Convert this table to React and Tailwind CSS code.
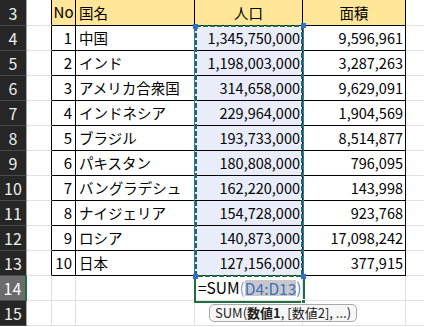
import React from 'react';

const rows = [
  [1, '中国', '1,345,750,000', '9,596,961'],
  [2, 'インド', '1,198,003,000', '3,287,263'],
  [3, 'アメリカ合衆国', '314,658,000', '9,629,091'],
  [4, 'インドネシア', '229,964,000', '1,904,569'],
  [5, 'ブラジル', '193,733,000', '8,514,877'],
  [6, 'パキスタン', '180,808,000', '796,095'],
  [7, 'バングラデシュ', '162,220,000', '143,998'],
  [8, 'ナイジェリア', '154,728,000', '923,768'],
  [9, 'ロシア', '140,873,000', '17,098,242'],
  [10, '日本', '127,156,000', '377,915'],
];

const font = { fontFamily: '"Noto Sans CJK JP", "Noto Sans", sans-serif' };

const RowHead = ({ n, active }) => (
  <div
    className={
      'w-[27px] shrink-0 flex items-center justify-center text-[16px] border-b border-b-[#4a4a4a] ' +
      (active
        ? 'bg-[#6b6b6b] text-white border-r-2 border-r-[#1e6e42]'
        : 'bg-[#262626] text-[#ececec] border-r border-r-[#a6a6a6]')
    }
  >
    {n}
  </div>
);

export default function App() {
  return (
    <div className="relative w-[424px] h-[327px] bg-white overflow-hidden text-black" style={font}>
      {/* header row */}
      <div className="flex h-[26px]">
        <RowHead n={3} />
        <div className="w-[25px] shrink-0 border-b border-b-[#e1e1e1] border-r border-r-black" />
        <div className="w-[24px] shrink-0 bg-[#ffe699] border-r border-b border-black flex items-center justify-center text-[15px]">No</div>
        <div className="w-[119px] shrink-0 bg-[#ffe699] border-r border-b border-black flex items-center pl-[3px] text-[14.5px]">国名</div>
        <div className="w-[108px] shrink-0 bg-[#ffe699] border-r border-b border-black flex items-center justify-center text-[14.5px]">人口</div>
        <div className="w-[103px] shrink-0 bg-[#ffe699] border-r border-b border-black flex items-center justify-center text-[14.5px]">面積</div>
        <div className="flex-1 border-b border-[#e1e1e1]" />
      </div>

      {rows.map(([no, name, pop, area], i) => (
        <div key={no} className="flex h-[25px]">
          <RowHead n={i + 4} />
          <div className="w-[25px] shrink-0 border-b border-b-[#e1e1e1] border-r border-r-black" />
          <div className="w-[24px] shrink-0 border-r border-b border-black flex items-center justify-end pr-[3px] text-[15px]">{no}</div>
          <div className="w-[119px] shrink-0 border-r border-b border-black flex items-center pl-[3px] text-[14.5px] whitespace-nowrap">{name}</div>
          <div className="w-[108px] shrink-0 bg-[#e9ecf9] border-r border-b border-black flex items-center justify-end pr-[2px] text-[14.5px]">{pop}</div>
          <div className="w-[103px] shrink-0 border-r border-b border-black flex items-center justify-end pr-[2px] text-[14.5px]">{area}</div>
          <div className="flex-1 border-b border-[#e1e1e1]" />
        </div>
      ))}

      {/* row 14 */}
      <div className="flex h-[25px]">
        <RowHead n={14} active />
        <div className="w-[25px] shrink-0 border-r border-b border-[#e1e1e1]" />
        <div className="w-[24px] shrink-0 border-r border-b border-[#e1e1e1]" />
        <div className="w-[119px] shrink-0 border-r border-b border-[#e1e1e1]" />
        <div className="w-[108px] shrink-0 border-r border-b border-[#e1e1e1] flex items-center pl-[3px] text-[15.5px] whitespace-nowrap">
          <span>=SUM</span>
          <span className="text-[#7f9cd0]">(</span>
          <span className="bg-[#c8c8c8] text-[#3d6fc6] leading-[16px]">D4:D13</span>
          <span className="text-[#5b82c8]">)</span>
        </div>
        <div className="w-[103px] shrink-0 border-r border-b border-[#e1e1e1]" />
        <div className="flex-1 border-b border-[#e1e1e1]" />
      </div>

      {/* row 15 */}
      <div className="flex h-[25px]">
        <RowHead n={15} />
        <div className="w-[25px] shrink-0 border-r border-b border-[#e1e1e1]" />
        <div className="w-[24px] shrink-0 border-r border-b border-[#e1e1e1]" />
        <div className="w-[119px] shrink-0 border-r border-b border-[#e1e1e1]" />
        <div className="w-[108px] shrink-0 border-r border-b border-[#e1e1e1]" />
        <div className="w-[103px] shrink-0 border-r border-b border-[#e1e1e1]" />
        <div className="flex-1 border-b border-[#e1e1e1]" />
      </div>

      {/* active cell D14 */}
      <div className="absolute left-[194px] top-[277px] w-[111px] h-[26px] border-x-2 border-b-2 border-[#1e6e42]" />
      <div className="absolute left-[301px] top-[299px] w-[5px] h-[5px] bg-[#1e6e42] border border-white" />

      {/* reference range D4:D13 */}
      <svg className="absolute left-[193px] top-[23px]" width="114" height="258">
        <line x1="1.5" y1="3" x2="1.5" y2="253" stroke="#2f6fd0" strokeWidth="1" />
        <line x1="110.5" y1="3" x2="110.5" y2="253" stroke="#2f6fd0" strokeWidth="1" />
        <rect x="3" y="3" width="106" height="250" fill="none" stroke="#1e6e42" strokeWidth="2" strokeDasharray="5 2" />
        <rect x="0" y="1" width="5" height="5" fill="#2f6fd0" />
        <rect x="108" y="0" width="5" height="5" fill="#2f6fd0" />
        <rect x="0" y="251" width="5" height="5" fill="#2f6fd0" />
        <rect x="108" y="251" width="5" height="5" fill="#2f6fd0" />
      </svg>

      {/* tooltip */}
      <div className="absolute left-[209px] top-[304px] h-[18px] px-[5px] flex items-center rounded-[5px] border border-[#a9a9a9] bg-[#f7f7f7] text-[13px] text-[#222] whitespace-nowrap">
        SUM(<b>数値1</b>, [数値2], ...)
      </div>
    </div>
  );
}
